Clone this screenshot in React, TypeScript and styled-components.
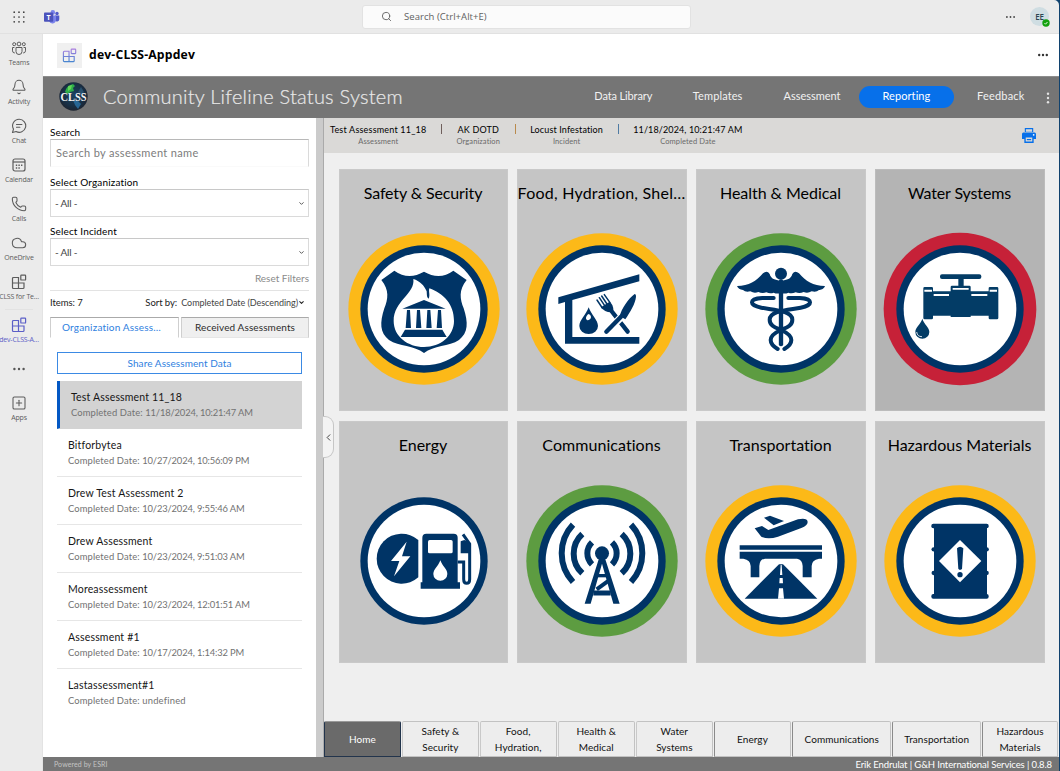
import React from 'react';
import styled, { createGlobalStyle, css } from 'styled-components';
import { Bell, Cloud, Phone, Search, SquarePlus, ChevronDown, ChevronLeft } from 'lucide-react';

const GlobalStyle = createGlobalStyle`
  * { box-sizing: border-box; }
  html, body { margin: 0; padding: 0; }
  body {
    font-family: Lato, "Liberation Sans", sans-serif;
    font-variant-ligatures: none;
    background: #ebebeb;
    color: #111;
    overflow: hidden;
  }
  button { font-family: inherit; margin: 0; padding: 0; border: 0; background: none; color: inherit; }
`;

const navy = '#003466';
const blue = '#0770ea';

const Window = styled.div`
  width: 1060px;
  height: 771px;
  display: flex;
  flex-direction: column;
  background: #ebebeb;
  border-right: 1px solid #10426e;
  position: relative;
`;
const WindowCorner = styled.svg`
  position: absolute;
  top: 0;
  right: 0;
`;

/* ---------- Teams top bar ---------- */
const TopBar = styled.header`
  height: 34px;
  flex: none;
  display: flex;
  align-items: center;
  padding: 0 10px 0 13px;
  border-bottom: 1px solid #e1e1e1;
`;
const TopGroup = styled.div<{ $gap: number; $end?: boolean }>`
  display: flex;
  align-items: center;
  gap: ${p => p.$gap}px;
  ${p => (p.$end ? css`margin-left: auto;` : css`width: 349px;`)}
`;
const SearchBox = styled.div`
  width: 329px;
  height: 24px;
  display: flex;
  align-items: center;
  gap: 12px;
  padding-left: 18px;
  background: #fbfbfb;
  border: 1px solid #e2e2e2;
  border-radius: 3px;
  font: 9.5px "Open Sans", sans-serif;
  letter-spacing: 0.05px;
  color: #616161;
`;
const Avatar = styled.div`
  position: relative;
  width: 19px;
  height: 19px;
  border-radius: 50%;
  background: #cfdde2;
  color: #2c4551;
  font: 600 8px/19px "Open Sans", sans-serif;
  text-align: center;
  letter-spacing: -0.3px;
`;
const Presence = styled.svg`
  position: absolute;
  right: -1px;
  bottom: -1px;
`;

const Body = styled.div`
  flex: 1;
  display: flex;
  min-height: 0;
`;

/* ---------- Teams rail ---------- */
const Rail = styled.nav`
  width: 43px;
  flex: none;
  padding: 1px 4px 0 0;
  display: flex;
  flex-direction: column;
  border-right: 1px solid #e3e3e3;
`;
const RailItem = styled.div<{ $active?: boolean }>`
  height: 39px;
  flex: none;
  display: flex;
  flex-direction: column;
  align-items: center;
  padding-top: 5px;
  color: ${p => (p.$active ? '#5b5fc7' : '#5c5c5c')};
  svg { flex: none; }
`;
const RailLabel = styled.span`
  margin-top: 2px;
  font: 7px/10px "Open Sans", sans-serif;
  letter-spacing: -0.17px;
  white-space: nowrap;
`;
const RailDivider = styled.hr`
  width: 28px;
  height: 1px;
  margin: 1px auto 2px;
  border: 0;
  background: #e2e2e2;
`;

/* ---------- app frame ---------- */
const AppColumn = styled.div`
  flex: 1;
  min-width: 0;
  display: flex;
  flex-direction: column;
`;
const AppHeader = styled.div`
  height: 42px;
  flex: none;
  display: flex;
  align-items: center;
  padding: 0 11px 0 14px;
  background: #fff;
`;
const AppTile = styled.div`
  width: 25px;
  height: 25px;
  display: grid;
  place-items: center;
  background: #f0f0f0;
`;
const AppName = styled.h1`
  flex: 1;
  margin: 0 0 0 7px;
  font: 700 12.2px/16px "Open Sans", sans-serif;
  letter-spacing: 0.17px;
  color: #000;
`;
const Toolbar = styled.div`
  height: 42px;
  flex: none;
  display: flex;
  align-items: center;
  padding: 0 9px 2px 16px;
  background: #757575;
  border-top: 1px solid #8d8d8d;
`;
const ToolbarTitle = styled.h2`
  flex: 1;
  margin: -2px 0 0 15px;
  font-size: 20px;
  line-height: 24px;
  font-weight: 300;
  letter-spacing: 0.23px;
  color: #e8e8e8;
  -webkit-text-stroke: 0.2px #e8e8e8;
`;
const NavButton = styled.button<{ $active?: boolean; $ls?: number }>`
  width: 94.4px;
  height: 22px;
  border-radius: 11px;
  padding-bottom: 1px;
  font-size: 11px;
  line-height: 20px;
  letter-spacing: ${p => p.$ls ?? 0}px;
  color: #f1f1f1;
  ${p => p.$active && css`background: ${blue}; color: #fff;`}
`;
const Kebab = styled.svg`
  margin: 2px 0 0 -2px;
`;

const Main = styled.div`
  flex: 1;
  min-height: 0;
  display: flex;
`;

/* ---------- filter panel ---------- */
const Panel = styled.aside`
  width: 273px;
  flex: none;
  padding: 7px 7px 0;
  background: #fff;
`;
const ScrollTrack = styled.div`
  width: 8px;
  flex: none;
  background: #cbcbcb;
  border-right: 1px solid #aaa;
`;
const FieldLabel = styled.label<{ $ls?: number }>`
  display: block;
  height: 14px;
  font-size: 10px;
  line-height: 14px;
  letter-spacing: ${p => p.$ls ?? 0.15}px;
  color: #000;
`;
const TextInput = styled.div`
  height: 28px;
  margin-bottom: 8px;
  padding-left: 5px;
  border: 1px solid #dadada;
  border-top-color: #b8b8b8;
  border-bottom-color: #fafafa;
  font-size: 11px;
  line-height: 25px;
  letter-spacing: 0.35px;
  color: #7c7c7c;
`;
const SelectBox = styled.div<{ $h: number }>`
  height: ${p => p.$h}px;
  margin-bottom: 7px;
  padding: 0 3px 0 4px;
  display: flex;
  align-items: center;
  justify-content: space-between;
  border: 1px solid #dadada;
  border-top-color: #c8c8c8;
  font-size: 10px;
  letter-spacing: -0.2px;
  color: #444;
`;
const ResetLink = styled.div`
  height: 18px;
  border-bottom: 1px solid #e3e3e3;
  text-align: right;
  font-size: 10px;
  line-height: 10px;
  color: #8a8a8a;
`;
const SortRow = styled.div`
  height: 26px;
  display: flex;
  align-items: center;
  padding: 0 4px 3px 0;
  font-size: 9.5px;
  letter-spacing: -0.05px;
  color: #222;
`;
const SortLabel = styled.span`
  margin-left: auto;
`;
const SortValue = styled.span`
  margin-left: 4px;
  font-size: 9px;
  color: #444;
`;
const TabRow = styled.div`
  display: grid;
  grid-template-columns: 129px 128px;
  gap: 2px;
  margin-bottom: 14px;
`;
const PanelTab = styled.button<{ $active?: boolean }>`
  height: 21px;
  border: 1px solid #cfcfcf;
  border-top-color: #aaa;
  border-bottom-color: ${p => (p.$active ? '#fff' : '#e6e6e6')};
  background: ${p => (p.$active ? '#fff' : '#efefef')};
  color: ${p => (p.$active ? '#2f7fe0' : '#2c2c2c')};
  font-size: 10px;
  line-height: 19px;
  letter-spacing: ${p => (p.$active ? 0.18 : 0.1)}px;
  ${p => p.$active && css`padding-right: 6px;`}
`;
const ShareButton = styled.button`
  display: block;
  width: 245px;
  height: 22px;
  margin: 0 0 7px 7px;
  border: 1px solid #3b8ae4;
  color: #2f7fe0;
  font-size: 10px;
  line-height: 20px;
  letter-spacing: 0.08px;
`;
const List = styled.ul`
  width: 245px;
  margin: 0 0 0 7px;
  padding: 0;
  list-style: none;
`;
const ListItem = styled.li<{ $selected?: boolean }>`
  height: 48px;
  padding: 9px 0 0 11px;
  border-bottom: 1px solid #e6e6e6;
  &:last-child { border-bottom: 0; }
  ${p => p.$selected && css`
    background: #d3d3d3;
    border-left: 3px solid #0358c4;
    border-bottom-color: #d3d3d3;
  `}
`;
const ItemName = styled.div`
  font-size: 10.5px;
  line-height: 14px;
  letter-spacing: 0.17px;
  color: #161616;
`;
const ItemDate = styled.div`
  margin-top: 3px;
  font-size: 9.4px;
  line-height: 12px;
  letter-spacing: 0.13px;
  color: #727272;
`;
const DateValue = styled.span<{ $ls: number }>`
  letter-spacing: ${p => p.$ls}px;
`;

/* ---------- report ---------- */
const Report = styled.section`
  position: relative;
  flex: 1;
  min-width: 0;
  display: flex;
  flex-direction: column;
  background: #efefef;
`;
const InfoBar = styled.div`
  height: 35px;
  flex: none;
  display: flex;
  align-items: flex-start;
  padding: 5px 23px 0 6px;
  background: #dad9d7;
`;
const InfoItem = styled.div`
  display: flex;
  flex-direction: column;
  align-items: center;
`;
const InfoValue = styled.span<{ $ls: number }>`
  font-size: 9px;
  line-height: 13px;
  letter-spacing: ${p => p.$ls}px;
  color: #000;
`;
const InfoKey = styled.span`
  font-size: 7.5px;
  line-height: 11px;
  letter-spacing: 0.1px;
  color: #6a6a6a;
`;
const InfoDivider = styled.span<{ $c: string }>`
  width: 1px;
  height: 10px;
  margin: 1px 14.6px 0;
  background: ${p => p.$c};
`;
const PrintIcon = styled.svg`
  margin: 5px 0 0 auto;
`;
const CollapseHandle = styled.button`
  position: absolute;
  left: -1px;
  top: 298px;
  width: 11px;
  height: 42px;
  display: grid;
  place-items: center;
  border: 1px solid #c6c6c6;
  border-left: 0;
  border-radius: 0 9px 9px 0;
  background: #f3f3f3;
  color: #333;
`;
const CardGrid = styled.div`
  flex: 1;
  display: grid;
  grid-template-columns: 169px 170px 170px 170px;
  grid-auto-rows: 242px;
  gap: 10px 9px;
  padding: 16px 14px 0 15px;
`;
const Card = styled.article<{ $dark?: boolean }>`
  display: flex;
  flex-direction: column;
  align-items: center;
  min-width: 0;
  background: ${p => (p.$dark ? '#b4b4b4' : '#c5c5c5')};
  border: 1px solid ${p => (p.$dark ? '#bcbcbc' : '#c9c9c9')};
`;
const CardTitle = styled.h3<{ $ls: number }>`
  margin: 12px 0 28px;
  padding-right: 1px;
  font-size: 16px;
  line-height: 22px;
  font-weight: 400;
  letter-spacing: ${p => p.$ls}px;
  white-space: nowrap;
  color: #000;
`;
const BottomTabs = styled.div`
  height: 36px;
  flex: none;
  display: grid;
  grid-template-columns: 78px 77.700px 78px 78px 78.300px 78px 100.5px 89.5px 1fr;
`;
const BottomTab = styled.button<{ $active?: boolean; $strong?: boolean }>`
  display: flex;
  align-items: center;
  justify-content: center;
  padding: 1px 10px 0;
  margin-right: 1px;
  border: 1px solid #c2c2c2;
  border-left-color: ${p => (p.$strong ? '#8a8a8a' : '#c9c9c9')};
  border-radius: 2px 2px 0 0;
  background: #ededed;
  color: #111;
  font-size: 10px;
  line-height: 15.5px;
  letter-spacing: 0.06px;
  ${p => p.$active && css`
    background: #6a6a6a;
    color: #fff;
    border-color: #999 #22344c #22344c;
  `}
`;
const StatusBar = styled.footer`
  height: 14px;
  flex: none;
  display: flex;
  align-items: center;
  justify-content: space-between;
  padding: 1px 7px 0 11px;
  background: #757575;
  color: #fff;
  font-size: 9.5px;
  line-height: 13px;
  letter-spacing: -0.11px;
`;
const Powered = styled.span`
  font-size: 7px;
  letter-spacing: 0.1px;
  color: #c4c4c4;
`;

/* ---------- small icons ---------- */
const AppsGlyph = ({ stroke = 'currentColor', size = 16 }: { stroke?: string; size?: number }) => (
  <svg width={size} height={size} viewBox="0 0 16 16" fill="none" stroke={stroke} strokeWidth="1.2">
    <defs>
      <linearGradient id="appGrad" gradientUnits="userSpaceOnUse" x1="8" y1="0" x2="8" y2="16">
        <stop offset="0" stopColor="#b07ce0" /><stop offset="1" stopColor="#3f86cf" />
      </linearGradient>
    </defs>
    <path d="M1.500 4.500a1 1 0 0 1 1-1h5v11h-5a1 1 0 0 1-1-1zM1.500 9h11.500v4.500a1 1 0 0 1-1 1H7.500" />
    <rect x="9.800" y="1.200" width="4.800" height="4.800" rx=".6" />
  </svg>
);
const TeamsRailIcon = () => (
  <svg width="16" height="16" viewBox="0 0 16 16" fill="none" stroke="currentColor" strokeWidth="1">
    <circle cx="8" cy="4" r="1.900" /><circle cx="3.200" cy="4.200" r="1.500" /><circle cx="12.800" cy="4.200" r="1.500" />
    <path d="M5 7.500h6v4a3 3 0 0 1-6 0zM3.400 7.500H1.500v3.300a2.300 2.300 0 0 0 2.300 2.200M12.600 7.500h1.900v3.300a2.300 2.300 0 0 1-2.300 2.200" />
  </svg>
);
const ChatIcon = () => (
  <svg width="16" height="16" viewBox="0 0 16 16" fill="none" stroke="currentColor" strokeWidth="1.100" strokeLinecap="round" strokeLinejoin="round">
    <path d="M8.200 1.300a6.500 6.500 0 1 1-3.100 12.200L1.500 14.500l1-3.400A6.500 6.500 0 0 1 8.200 1.300zM5.500 6.500h5.400M5.500 9.300h3.400" />
  </svg>
);
const CalendarIcon = () => (
  <svg width="16" height="16" viewBox="0 0 16 16" fill="none" stroke="currentColor" strokeWidth="1.200">
    <rect x="2" y="2" width="12" height="12" rx="2" />
    <path d="M2 5h12" />
    <path d="M4.800 8.200h1.400M7.400 8.200h1.400M10 8.200h1.400M4.800 11h1.400M7.400 11h1.400" strokeWidth="1.400" />
  </svg>
);
const MoreIcon = () => (
  <svg width="12" height="26" viewBox="0 0 12 26" fill="#555">
    <circle cx="1.400" cy="13" r="1.200" /><circle cx="6" cy="13" r="1.200" /><circle cx="10.600" cy="13" r="1.200" />
  </svg>
);
const Dots = ({ w, r, c = '#444' }: { w: number; r: number; c?: string }) => (
  <svg width={w} height="6" viewBox={`0 0 ${w} 6`} fill={c}>
    <circle cx={r} cy="3" r={r} /><circle cx={w / 2} cy="3" r={r} /><circle cx={w - r} cy="3" r={r} />
  </svg>
);
const Waffle = () => (
  <svg width="12" height="12" viewBox="0 0 12 12" fill="#3c3c3c">
    {[1.2, 6, 10.800].map(y => [1.2, 6, 10.800].map(x => <circle key={`${x}-${y}`} cx={x} cy={y} r=".85" />))}
  </svg>
);
const TeamsLogo = () => (
  <svg width="16" height="14" viewBox="0 0 16 14">
    <circle cx="13" cy="3.500" r="1.700" fill="#5059c9" />
    <circle cx="8.800" cy="2.400" r="2.300" fill="#7b83eb" />
    <path d="M11 5.500h4.300v3.800a2.300 2.300 0 0 1-4.300 1z" fill="#5059c9" />
    <path d="M5 5.500h7v4.500a3.600 3.600 0 0 1-7 1z" fill="#7b83eb" />
    <rect x="0" y="2.500" width="9.200" height="9.200" rx=".8" fill="#4b53bc" />
    <text x="4.600" y="9.700" textAnchor="middle" fontFamily="Open Sans" fontWeight="700" fontSize="7" fill="#fff">T</text>
  </svg>
);
const ClssLogo = () => (
  <svg width="29" height="29" viewBox="0 0 29 29">
    <defs>
      <radialGradient id="globe" cx=".5" cy=".45" r=".55">
        <stop offset="0" stopColor="#1c4260" /><stop offset=".7" stopColor="#182f45" /><stop offset="1" stopColor="#1d2430" />
      </radialGradient>
    </defs>
    <circle cx="14.500" cy="14.500" r="14.200" fill="url(#globe)" />
    <path d="M6 10q1-6 8-8l2 2-2 2 1 3-4 1-2 2z" fill="#2fae4a" />
    <path d="M9 4l4-1-1 4-3 2z" fill="#6fe05a" opacity=".8" />
    <path d="M14 18l5 1 3 3-3 5-3-4z" fill="#2b73a8" opacity=".8" />
    <path d="M22 5l3 5-3 3-3-3z" fill="#28506e" />
    <text x="14.500" y="18.500" textAnchor="middle" fontFamily="Liberation Serif" fontWeight="700" fontSize="11.500" textLength="26" lengthAdjust="spacingAndGlyphs" fill="#f4f4f4">CLSS</text>
  </svg>
);

/* ---------- lifeline emblems ---------- */
type EmblemProps = { ring?: string; cx: number; cy: number; outer?: number; children: React.ReactNode };
const Emblem = ({ ring, cx, cy, outer = 227, children }: EmblemProps) => (
  <svg width="154" height="154" viewBox="-231 -231 462 462">
    {ring && <circle r={outer} fill={ring} />}
    <circle r="191" fill={navy} />
    <circle r="169" fill="#fff" />
    <g transform={`translate(${-cx} ${-cy})`} fill={navy}>{children}</g>
  </svg>
);
const yellow = '#fcb918';
const green = '#5d9c41';
const red = '#c62138';

const Safety = () => (
  <Emblem ring={yellow} cx={283} cy={267}>
    <path d="M194 152Q236 182 283 155Q330 182 371 152L411 180C386 210 391 238 402 265C416 308 416 338 388 360C358 380 312 376 283 399C254 376 208 380 178 360C150 338 150 308 164 265C175 238 180 210 155 180Z" />
    <path fill="#fff" d="M251 177C257 222 192 242 192 303C192 350 235 381 283 381C333 381 373 347 373 303C373 252 342 221 299 205C296 215 302 224 297 236C291 232 292 226 291 214C284 196 270 183 251 177Z" />
    <path d="M218 266L283 240L348 266ZM232 270H241L244 324H228ZM262 270H271L275 324H259ZM293 270H302L306 324H290ZM325 270H334L337 324H321ZM226 329H338L351 351H213Z" />
  </Emblem>
);
const Food = () => (
  <Emblem ring={yellow} cx={263} cy={267}>
    <path d="M132 232L375 163V184L174 240V351H375V371H152V246L132 252Z" />
    <path d="M223 262C215 285 195 300 195 318A28 24 0 0 0 251 318C251 300 231 285 223 262Z" />
    <path fill="#fff" d="M222 282C213 291 213 298 220 301C229 299 233 291 227 284Z" />
    <path fill="none" stroke={navy} strokeWidth="4.500" strokeLinecap="round" d="M248 240L264 264M255 233L271 257M262 228L278 252M270 224L287 248" />
    <path d="M260 262L286 245Q297 254 297 270L290 277Q270 277 260 262Z" />
    <path stroke={navy} strokeWidth="13" strokeLinecap="round" d="M289 270L340 335" />
    <path stroke="#fff" strokeWidth="22" d="M306 306L332 280" />
    <path d="M361 222Q366 222 365 230C363 252 347 276 333 298L316 288C322 266 342 236 361 222Z" />
    <path stroke={navy} strokeWidth="13" strokeLinecap="round" d="M320 290L276 335" />
  </Emblem>
);
const snake = 'M252 234H218C176 236 178 256 215 263C250 270 308 272 308 299C308 318 290 323 274 330C256 338 243 346 243 360C243 372 252 380 264 387';
const Health = () => (
  <Emblem ring={green} cx={274} cy={267}>
    <circle cx="274" cy="161" r="18" />
    <rect x="267.500" y="178" width="13" height="201" rx="6" />
    <path d="M142 198C178 198 200 184 220 160Q232 150 240 162C244 177 256 180 274 182C292 180 304 177 308 162Q316 150 328 160C348 184 370 198 406 198C402 208 393 210 388 210Q380 218 366 214Q354 221 342 216Q330 221 318 217Q306 222 296 218Q286 223 274 219Q262 223 252 218Q242 222 230 217Q218 221 206 216Q194 221 182 214Q168 218 160 210Q146 208 142 198Z" />
    <g fill="none" stroke={navy} strokeWidth="12" strokeLinecap="round">
      <path d={snake} />
      <path d={snake} transform="translate(548 0) scale(-1 1)" />
    </g>
  </Emblem>
);
const Water = () => (
  <Emblem ring={red} cx={269} cy={266} outer={229}>
    <g fill="#033c66">
      <rect x="209" y="162" width="124" height="14" rx="6" />
      <path d="M264 174H280V196H297Q301 196 301 200V213H355V203Q355 200 359 200H380Q384 200 384 204V293Q384 297 380 297H359Q355 297 355 293V286H301V290H241V286H188V293Q188 297 184 297H163Q159 297 159 293V204Q159 200 163 200H184Q188 200 188 203V213H241V200Q241 196 245 196H264Z" />
      <path d="M156 295C151 312 135 320 135 335A21 20 0 0 0 177 335C177 320 161 312 156 295Z" />
    </g>
    <path fill="#fff" d="M247 203H295V208H247ZM190 221H236V227H190ZM303 221H351V227H303ZM162 208H185V214H162ZM358 208H380V214H358Z" />
    <path fill="none" stroke="#fff" strokeWidth="2.500" d="M139 335A16 16 0 0 0 155 349" />
  </Emblem>
);
const Energy = () => (
  <Emblem cx={311} cy={451}>
    <path d="M294 388V500A75 75 0 1 1 294 388Z" />
    <path fill="#fff" d="M259 393L212 451H237L221 497L270 437H245Z" />
    <path d="M318 369H400Q412 369 412 381V515H419V534H301V515H306V381Q306 369 318 369Z" />
    <rect x="323" y="388" width="74" height="40" rx="5" fill="#fff" />
    <path fill="#fff" d="M360 449C354 467 339 475 339 490A21 20 0 0 0 381 490C381 475 366 467 360 449Z" />
    <path fill="none" stroke={navy} strokeWidth="9" d="M412 454H430V506Q430 518 439 518Q448 518 448 506V400L428 371" />
    <path d="M421 392L432 388L450 396V428H421Z" />
  </Emblem>
);
const Communications = () => (
  <Emblem ring={green} cx={848} cy={451}>
    <circle cx="848" cy="428" r="21" />
    <g fill="none" stroke={navy} strokeWidth="18">
      <path d="M761 342A126 126 0 0 0 761 514M789 370A80 80 0 0 0 789 488M818 395A46 46 0 0 0 818 461" />
      <path d="M935 342A126 126 0 0 1 935 514M907 370A80 80 0 0 1 907 488M878 395A46 46 0 0 1 878 461" />
      <path strokeWidth="10" d="M834 495H862" />
      <path strokeWidth="15" d="M822 547H874" />
      <path strokeWidth="12" d="M832 536L868 510" />
    </g>
    <path d="M840 440H856L901 579H882L848 459L814 579H796Z" />
  </Emblem>
);
const Transportation = () => (
  <Emblem ring={yellow} cx={274} cy={451}>
    <path d="M195 353L217 346L236 358L325 326Q353 320 354 334Q354 345 335 352L265 378Q235 388 215 378Z" />
    <path d="M223 321L241 315L283 331L252 344Z" />
    <path d="M150 404H397V417H150ZM150 423H397V444H388Q366 448 366 466V500H339V466Q338 446 322 444H226Q210 446 209 466V500H183V466Q183 448 161 444H150Z" />
    <path d="M268 461H280L383 564H165Z" />
    <path fill="#fff" d="M273 463H276L278 493H271ZM270 502H279L280 518H269ZM268 533H280L283 564H265Z" />
  </Emblem>
);
const Hazard = () => (
  <Emblem ring={yellow} cx={811} cy={451}>
    <path d="M733 345H892V560H733Z" />
    <rect x="725" y="339" width="172" height="14" rx="6" />
    <rect x="725" y="550" width="172" height="14" rx="6" />
    <circle cx="732" cy="416" r="6.500" /><circle cx="891" cy="416" r="6.500" />
    <circle cx="732" cy="487" r="6.500" /><circle cx="891" cy="487" r="6.500" />
    <path fill="#fff" d="M811 388L875 451L811 515L748 451Z" />
    <path d="M802 413Q811 403 821 413L817 474Q811 481 806 474Z" />
    <circle cx="811" cy="492" r="8" />
  </Emblem>
);

const assessments = [
  ['Test Assessment 11_18', '11/18/2024, 10:21:47 AM'],
  ['Bitforbytea', '10/27/2024, 10:56:09 PM'],
  ['Drew Test Assessment 2', '10/23/2024, 9:55:46 AM'],
  ['Drew Assessment', '10/23/2024, 9:51:03 AM'],
  ['Moreassessment', '10/23/2024, 12:01:51 AM'],
  ['Assessment #1', '10/17/2024, 1:14:32 PM'],
  ['Lastassessment#1', 'undefined'],
];
const info: [string, string, number, string][] = [
  ['Test Assessment 11_18', 'Assessment', 0.2, ''],
  ['AK DOTD', 'Organization', 0.2, '#6f5f5c'],
  ['Locust Infestation', 'Incident', 0.14, '#b98a4c'],
  ['11/18/2024, 10:21:47 AM', 'Completed Date', 0.12, '#4f7ba3'],
];
const cards: [string, number, React.FC][] = [
  ['Safety & Security', -0.12, Safety],
  ['Food, Hydration, Shel…', 0.23, Food],
  ['Health & Medical', -0.04, Health],
  ['Water Systems', -0.13, Water],
  ['Energy', 0, Energy],
  ['Communications', 0.05, Communications],
  ['Transportation', 0, Transportation],
  ['Hazardous Materials', 0.01, Hazard],
];
const tabs = ['Home', 'Safety & Security', 'Food, Hydration,', 'Health & Medical', 'Water Systems', 'Energy', 'Communications', 'Transportation', 'Hazardous Materials'];

export default function App() {
  return (
    <Window>
      <GlobalStyle />
      <TopBar>
        <TopGroup $gap={19}><Waffle /><TeamsLogo /></TopGroup>
        <SearchBox><Search size={11} strokeWidth={2} />Search (Ctrl+Alt+E)</SearchBox>
        <TopGroup $gap={15} $end>
          <Dots w={9} r={0.9} />
          <Avatar>EE
            <Presence width="8" height="8" viewBox="0 0 8 8">
              <circle cx="4" cy="4" r="3.700" fill="#13a10e" />
              <path d="M2.500 4.200l1 1 2-2.200" fill="none" stroke="#fff" strokeWidth=".9" />
            </Presence>
          </Avatar>
        </TopGroup>
      </TopBar>
      <Body>
        <Rail>
          <RailItem><TeamsRailIcon /><RailLabel>Teams</RailLabel></RailItem>
          <RailItem><Bell size={16} strokeWidth={1.6} /><RailLabel>Activity</RailLabel></RailItem>
          <RailItem><ChatIcon /><RailLabel>Chat</RailLabel></RailItem>
          <RailItem><CalendarIcon /><RailLabel>Calendar</RailLabel></RailItem>
          <RailItem><Phone size={16} strokeWidth={1.6} /><RailLabel>Calls</RailLabel></RailItem>
          <RailItem><Cloud size={16} strokeWidth={1.6} /><RailLabel>OneDrive</RailLabel></RailItem>
          <RailItem><AppsGlyph /><RailLabel>CLSS for Te...</RailLabel></RailItem>
          <RailDivider />
          <RailItem $active><AppsGlyph /><RailLabel>dev-CLSS-A...</RailLabel></RailItem>
          <RailItem><MoreIcon /></RailItem>
          <RailItem><SquarePlus size={16} strokeWidth={1.6} /><RailLabel>Apps</RailLabel></RailItem>
        </Rail>
        <AppColumn>
          <AppHeader>
            <AppTile><AppsGlyph stroke="url(#appGrad)" size={15} /></AppTile>
            <AppName>dev-CLSS-Appdev</AppName>
            <Dots w={10} r={1.2} c="#333" />
          </AppHeader>
          <Toolbar>
            <ClssLogo />
            <ToolbarTitle>Community Lifeline Status System</ToolbarTitle>
            <NavButton $ls={-0.12}>Data Library</NavButton>
            <NavButton $ls={0.12}>Templates</NavButton>
            <NavButton $ls={-0.02}>Assessment</NavButton>
            <NavButton $active $ls={0.08}>Reporting</NavButton>
            <NavButton $ls={0.2}>Feedback</NavButton>
            <Kebab width="4" height="12" viewBox="0 0 4 12" fill="#e4e4e4">
              <circle cx="2" cy="1.700" r="1.200" /><circle cx="2" cy="6" r="1.200" /><circle cx="2" cy="10.300" r="1.200" />
            </Kebab>
          </Toolbar>
          <Main>
            <Panel>
              <FieldLabel>Search</FieldLabel>
              <TextInput>Search by assessment name</TextInput>
              <FieldLabel>Select Organization</FieldLabel>
              <SelectBox $h={28}>- All -<ChevronDown size={7} strokeWidth={3} /></SelectBox>
              <FieldLabel>Select Incident</FieldLabel>
              <SelectBox $h={28}>- All -<ChevronDown size={7} strokeWidth={3} /></SelectBox>
              <ResetLink>Reset Filters</ResetLink>
              <SortRow>
                <span>Items: 7</span>
                <SortLabel>Sort by:</SortLabel>
                <SortValue>Completed Date (Descending)</SortValue>
                <ChevronDown size={7} strokeWidth={3.5} />
              </SortRow>
              <TabRow>
                <PanelTab $active>Organization Assess…</PanelTab>
                <PanelTab>Received Assessments</PanelTab>
              </TabRow>
              <ShareButton>Share Assessment Data</ShareButton>
              <List>
                {assessments.map(([name, date], i) => (
                  <ListItem key={name} $selected={i === 0}>
                    <ItemName>{name}</ItemName>
                    <ItemDate>Completed Date: <DateValue $ls={date === 'undefined' ? 0.22 : -0.15}>{date}</DateValue></ItemDate>
                  </ListItem>
                ))}
              </List>
            </Panel>
            <ScrollTrack />
            <Report>
              <InfoBar>
                {info.map(([value, key, ls, divider]) => (
                  <React.Fragment key={key}>
                    {divider && <InfoDivider $c={divider} />}
                    <InfoItem><InfoValue $ls={ls}>{value}</InfoValue><InfoKey>{key}</InfoKey></InfoItem>
                  </React.Fragment>
                ))}
                <PrintIcon width="14" height="15" viewBox="0 0 15 15" fill={blue} preserveAspectRatio="none">
                  <path d="M3 0h9v4H3zM1.500 4.500h12A1.500 1.500 0 0 1 15 6v5h-2.500v4h-10v-4H0V6a1.500 1.500 0 0 1 1.500-1.500z" />
                  <path fill="#dad9d7" d="M4.200 1.300h6.600v2.500H4.200zM4 9.500h7v4H4z" />
                  <circle cx="12.500" cy="6.800" r=".9" fill="#fff" />
                  <path d="M5.200 11h4.600v1.200H5.200z" />
                </PrintIcon>
              </InfoBar>
              <CardGrid>
                {cards.map(([title, ls, Icon]) => (
                  <Card key={title} $dark={title === 'Water Systems'}>
                    <CardTitle $ls={ls}>{title}</CardTitle>
                    <Icon />
                  </Card>
                ))}
              </CardGrid>
              <BottomTabs>
                {tabs.map((t, i) => <BottomTab key={t} $active={i === 0} $strong={i > 4}>{t}</BottomTab>)}
              </BottomTabs>
              <CollapseHandle><ChevronLeft size={11} strokeWidth={2} /></CollapseHandle>
            </Report>
          </Main>
          <StatusBar>
            <Powered>Powered by ESRI</Powered>
            <span>Erik Endrulat | G&amp;H International Services | 0.8.8</span>
          </StatusBar>
        </AppColumn>
      </Body>
      <WindowCorner width="5" height="5" viewBox="0 0 5 5"><path d="M0 0H5V5A5 5 0 0 0 0 0Z" fill="#10426e" /></WindowCorner>
    </Window>
  );
}
